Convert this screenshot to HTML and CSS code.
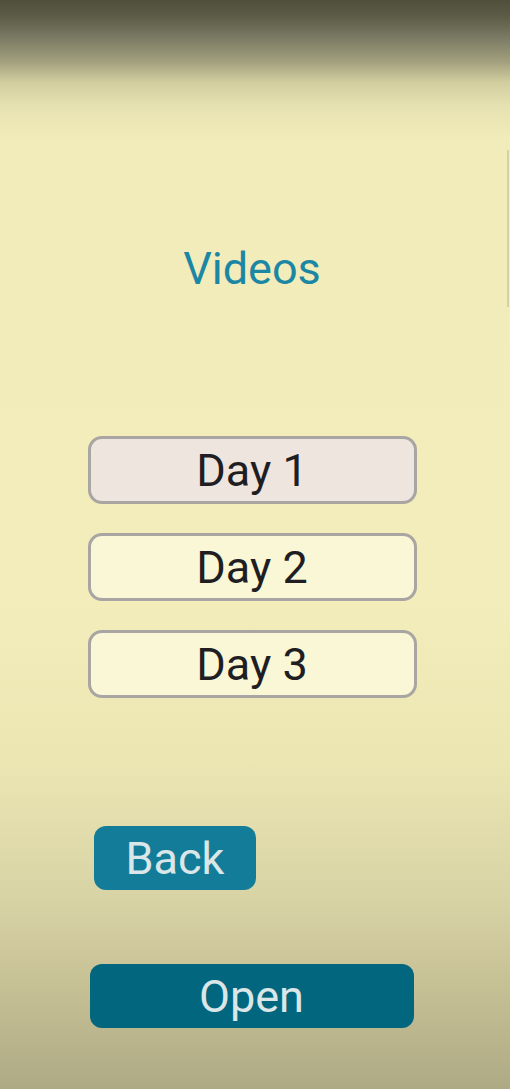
FILE: index.html
```html
<!DOCTYPE html>
<html>
<head>
<meta charset="utf-8">
<link rel="stylesheet" href="styles.css">
</head>
<body>
<div class="screen">
  <div class="scrollbar"></div>
  <h1 class="title">Videos</h1>
  <div class="days">
    <div class="day day-active">Day 1</div>
    <div class="day">Day 2</div>
    <div class="day">Day 3</div>
  </div>
  <div class="back-row"><div class="btn btn-back">Back</div></div>
  <div class="btn btn-open">Open</div>
</div>
</body>
</html>
```
FILE: styles.css
```css
* { box-sizing: border-box; }
html, body { margin: 0; padding: 0; }
body {
  width: 510px;
  height: 1089px;
  overflow: hidden;
  font-family: Roboto, "Noto Sans", sans-serif;
}
.screen {
  position: relative;
  width: 510px;
  height: 1089px;
  background: linear-gradient(to bottom,
    #4f4f3c 0px,
    #5a5a45 15px,
    #777660 35px,
    #a3a07e 62px,
    #d2cd9f 82px,
    #e6e1b0 105px,
    #f1ecb9 140px,
    #f2edba 600px,
    #ece6b3 760px,
    #d8d3a5 900px,
    #c5bf94 990px,
    #aeaa84 1089px);
  display: flex;
  flex-direction: column;
  align-items: center;
  padding-top: 241px;
}
.scrollbar {
  position: absolute;
  right: 1px;
  top: 150px;
  width: 2px;
  height: 157px;
  background: #d6d1a8;
}
.title {
  margin: 0;
  font-weight: 400;
  font-size: 45px;
  line-height: 56px;
  color: #1b87a4;
  margin-left: -6px;
}
.days {
  margin-top: 139px;
  display: flex;
  flex-direction: column;
  gap: 29px;
  margin-left: -6px;
}
.day {
  width: 329px;
  height: 68px;
  border: 3px solid #a8a5a3;
  border-radius: 14px;
  background: #f9f7d6;
  color: #1f1e22;
  font-size: 45px;
  display: flex;
  align-items: center;
  justify-content: center;
  padding-top: 1px;
}
.day-active { background: #eee5df; }
.back-row {
  width: 322px;
  margin-top: 128px;
  margin-left: 0px;
}
.btn {
  border-radius: 12px;
  color: #dbe6e8;
  font-size: 45px;
  display: flex;
  align-items: center;
  justify-content: center;
}
.btn-back {
  width: 162px;
  height: 64px;
  background: #137d99;
}
.btn-open {
  width: 324px;
  height: 64px;
  margin-top: 74px;
  margin-left: -7px;
  background: #02667e;
}
```
